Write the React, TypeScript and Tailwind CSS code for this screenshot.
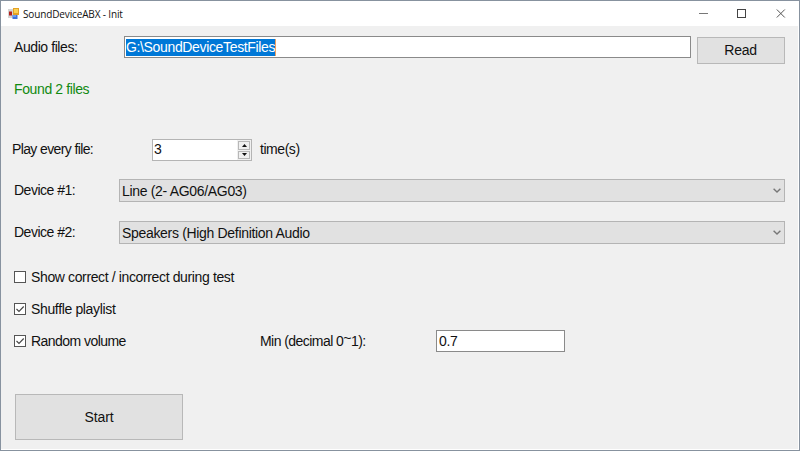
import type { ReactNode } from "react";

function Label({ children, className = "" }: { children: ReactNode; className?: string }) {
  return <span className={`block whitespace-pre leading-4 ${className}`}>{children}</span>;
}

function AppIcon() {
  return (
    <svg width="12" height="12" viewBox="0 0 12 12" className="shrink-0">
      <rect x="0" y="1" width="6" height="9" fill="#d4d4d4" />
      <rect x="1" y="3.5" width="3" height="4" fill="#b3201c" />
      <rect x="5" y="0" width="6" height="7" fill="#e3a126" />
      <rect x="6" y="1" width="4" height="4" fill="#fbd152" />
      <rect x="4.5" y="7" width="5" height="4" fill="#3f74dc" />
      <rect x="5" y="7" width="3" height="2" fill="#6d9df0" />
    </svg>
  );
}

function TitleBar() {
  return (
    <header className="flex h-[25px] shrink-0 items-center bg-white pl-[7px] pr-[13px]">
      <AppIcon />
      <span
        className="ml-[3px] whitespace-pre text-[10px] leading-4 tracking-[-0.14px] text-[#111]"
        style={{ fontFamily: '"Open Sans", sans-serif' }}
      >
        SoundDeviceABX - Init
      </span>
      <div className="ml-auto flex items-center">
        <svg width="9" height="9" className="mr-[29px] block">
          <path d="M0 4.5h9" stroke="#777" fill="none" />
        </svg>
        <svg width="9" height="9" className="mr-[30px] block">
          <rect x="0.5" y="0.5" width="8" height="8" stroke="#444" fill="none" />
        </svg>
        <svg width="10" height="9" className="block">
          <path d="M0.8 0.5l8 8M8.8 0.5l-8 8" stroke="#555" fill="none" />
        </svg>
      </div>
    </header>
  );
}

function Combo({ text }: { text: string }) {
  return (
    <div className="flex h-[23px] w-[666px] items-center justify-between border border-[#b4b4b4] bg-[#e1e1e1] pl-[2px] pr-[3px]">
      <Label className="tracking-[-0.32px]">{text}</Label>
      <svg width="8" height="5" className="block">
        <path d="M0.6 0.7L4 4L7.4 0.7" stroke="#777" strokeWidth="1.4" fill="none" />
      </svg>
    </div>
  );
}

function Check({ label, checked = false, className = "" }: { label: string; checked?: boolean; className?: string }) {
  return (
    <div className="flex items-center gap-[5px]">
      <svg width="12" height="12" className="block">
        <rect x="0.5" y="0.5" width="11" height="11" fill="#fff" stroke="#555" />
        {checked && <path d="M2.5 6L5 8.5L9.7 3.5" stroke="#444" strokeWidth="1.1" fill="none" />}
      </svg>
      <Label className={className}>{label}</Label>
    </div>
  );
}

export default function App() {
  return (
    <div
      className="flex h-[451px] w-[800px] flex-col overflow-hidden border border-[#87929f] bg-white text-[14px] text-[#111]"
      style={{ fontFamily: '"Liberation Sans", Arial, sans-serif' }}
    >
      <TitleBar />
      <main className="mr-px mb-px flex flex-1 flex-col bg-[#f0f0f0]">
        <div className="flex h-[43px] items-start pt-[10px]">
          <Label className="mt-[3px] ml-[13px] w-[110px] tracking-[-0.42px]">Audio files:</Label>
          <div className="flex h-[22px] w-[567px] items-center border border-[#8a8a8a] bg-white pl-px">
            <span className="h-[17px] whitespace-pre border-r border-[#f0a060] bg-[#0078d7] leading-[17px] tracking-[-0.35px] text-white">
              G:\SoundDeviceTestFiles
            </span>
          </div>
          <div className="mt-px ml-[6px] flex h-[27px] w-[88px] items-center justify-center border border-[#b8b8b8] bg-[#e1e1e1]">
            <Label className="mr-px mb-[2px] tracking-[-0.3px]">Read</Label>
          </div>
        </div>
        <div className="flex h-[70px] items-start pt-3 pl-[13px] text-[#108a10]">
          <Label className="tracking-[-0.38px]">Found 2 files</Label>
        </div>
        <div className="flex h-[22px] items-center pl-[11px]">
          <Label className="mb-[2px] w-[140px] tracking-[-0.62px]">Play every file:</Label>
          <div className="flex h-[22px] w-[100px] items-center border border-[#b4b4b4] bg-white">
            <Label className="mb-[2px] flex-1 pl-px">3</Label>
            <div className="flex h-5 w-[14px] flex-col gap-px bg-[#f0f0f0] p-px">
              <div className="flex flex-1 items-center justify-center border border-[#b8b8b8]">
                <svg width="5" height="3" className="block"><path d="M2.5 0L5 3H0Z" fill="#111" /></svg>
              </div>
              <div className="flex flex-1 items-center justify-center border border-[#b8b8b8]">
                <svg width="5" height="3" className="block"><path d="M2.5 3L5 0H0Z" fill="#111" /></svg>
              </div>
            </div>
          </div>
          <Label className="mb-[2px] ml-2 tracking-[-0.45px]">time(s)</Label>
        </div>
        <div className="mt-[18px] flex items-center pl-[13px]">
          <Label className="mb-[2px] w-[105px] tracking-[-0.5px]">Device #1:</Label>
          <Combo text="Line (2- AG06/AG03)" />
        </div>
        <div className="mt-[19px] flex items-center pl-[13px]">
          <Label className="mb-[2px] w-[105px] tracking-[-0.5px]">Device #2:</Label>
          <Combo text="Speakers (High Definition Audio" />
        </div>
        <div className="mt-[25px] flex h-4 pl-[13px]">
          <Check label="Show correct / incorrect during test" className="tracking-[-0.37px]" />
        </div>
        <div className="mt-4 flex h-4 pl-[13px]">
          <Check label="Shuffle playlist" checked className="tracking-[-0.35px]" />
        </div>
        <div className="mt-[13px] flex h-[22px] items-center pl-[13px]">
          <div className="w-[246px]">
            <Check label="Random volume" checked className="tracking-[-0.55px]" />
          </div>
          <Label className="w-[176px] tracking-[-0.55px]">
            Min (decimal 0<span className="relative -top-[3px]">~</span>1):
          </Label>
          <div className="flex h-[22px] w-[129px] items-center border border-[#8a8a8a] bg-white pl-[2px]">
            <Label className="tracking-[-0.3px]">0.7</Label>
          </div>
        </div>
        <div className="mt-[42px] ml-[14px] flex h-[46px] w-[168px] items-center justify-center border border-[#b8b8b8] bg-[#e1e1e1]">
          <Label className="tracking-[-0.1px]">Start</Label>
        </div>
      </main>
    </div>
  );
}
